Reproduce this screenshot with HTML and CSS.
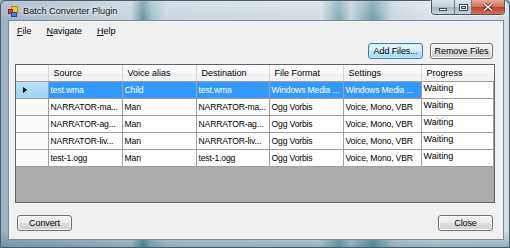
FILE: index.html
```html
<!DOCTYPE html>
<html lang="en">
<head>
<meta charset="UTF-8">
<title>Batch Converter Plugin</title>
<link rel="stylesheet" href="styles.css">
</head>
<body>

<div class="win">
  <div class="titlebar">
    <svg class="appicon" width="10" height="11" viewBox="0 0 10 11">
      <rect x="3.5" y="0.5" width="6" height="6" fill="#f2c43a" stroke="#b58a1c"/>
      <rect x="0.5" y="3.5" width="4" height="4" fill="#d9432e" stroke="#8e2315"/>
      <rect x="3.5" y="6.5" width="5" height="4" fill="#4f7fd6" stroke="#24489a"/>
    </svg>
    <span class="title">Batch Converter Plugin</span>
    <div class="ctrls">
      <span class="cb min"><i></i></span>
      <span class="cb max"><i></i></span>
      <span class="cb close">
        <svg width="10" height="8" viewBox="0 0 10 8"><path d="M1 0.5 L9 7.5 M9 0.5 L1 7.5" stroke="#5a1a12" stroke-width="3.2"/><path d="M1 0.5 L9 7.5 M9 0.5 L1 7.5" stroke="#fff" stroke-width="1.6"/></svg>
      </span>
    </div>
  </div>

  <div class="client">
    <nav class="menu">
      <span><u>F</u>ile</span>
      <span><u>N</u>avigate</span>
      <span><u>H</u>elp</span>
    </nav>

    <div class="tools">
      <button class="btn focus w55">Add Files...</button>
      <button class="btn w63">Remove Files</button>
    </div>

    <div class="grid">
      <table>
        <colgroup>
          <col class="c-rh"><col class="c74"><col class="c74"><col class="c73"><col class="c74"><col class="c78"><col>
        </colgroup>
        <thead>
          <tr>
            <th class="rh"></th><th>Source</th><th>Voice alias</th><th>Destination</th><th>File Format</th><th>Settings</th><th>Progress</th>
          </tr>
        </thead>
        <tbody>
          <tr class="sel">
            <td class="rh cur"><span class="arrow"></span></td><td>test.wma</td><td>Child</td><td>test.wma</td><td>Windows Media ...</td><td>Windows Media ...</td><td class="prog">Waiting</td>
          </tr>
          <tr>
            <td class="rh"></td><td>NARRATOR-ma...</td><td>Man</td><td>NARRATOR-ma...</td><td>Ogg Vorbis</td><td>Voice, Mono, VBR</td><td class="prog">Waiting</td>
          </tr>
          <tr>
            <td class="rh"></td><td>NARRATOR-ag...</td><td>Man</td><td>NARRATOR-ag...</td><td>Ogg Vorbis</td><td>Voice, Mono, VBR</td><td class="prog">Waiting</td>
          </tr>
          <tr>
            <td class="rh"></td><td>NARRATOR-liv...</td><td>Man</td><td>NARRATOR-liv...</td><td>Ogg Vorbis</td><td>Voice, Mono, VBR</td><td class="prog">Waiting</td>
          </tr>
          <tr>
            <td class="rh"></td><td>test-1.ogg</td><td>Man</td><td>test-1.ogg</td><td>Ogg Vorbis</td><td>Voice, Mono, VBR</td><td class="prog">Waiting</td>
          </tr>
        </tbody>
      </table>
    </div>

    <div class="foot">
      <button class="btn w55">Convert</button>
      <button class="btn w55">Close</button>
    </div>
  </div>
</div>

</body>
</html>
```

FILE: styles.css
```css
*{box-sizing:border-box}
body{margin:0;background:#8ea4b4;font-family:"Liberation Sans",Arial,sans-serif;font-size:9px;color:#000}

/* window frame (aero glass look) */
.win{width:510px;height:248px;display:flex;flex-direction:column;padding:0 5px 7px 7px;border:1px solid #4c5c6a;border-radius:6px 6px 0 0;
  background:
    linear-gradient(180deg,rgba(255,255,255,.25),rgba(255,255,255,0) 20px,rgba(0,0,0,0) 230px,rgba(20,90,110,.35)),
    linear-gradient(90deg,#9db1c1 0,#b7c7d3 90px,#c6d3dc 130px,#5f959f 142px,#9cbcc5 150px,#c9d6de 165px,#d3dde3 320px,#7eaab3 338px,#c2d3da 350px,#6d9fa9 372px,#cad7dd 392px,#dbe3e8 430px,#d2dde4 100%)}

.titlebar{height:19px;display:flex;align-items:center;padding-left:0}
.appicon{display:block;margin-top:1px}
.title{margin-left:5px;margin-top:1px;font-size:9.2px;color:#111;text-shadow:0 0 6px #fff,0 0 3px #fff}

.ctrls{margin-left:auto;margin-right:-1px;margin-top:-1px;align-self:flex-start;display:flex;height:15px;border:1px solid #4a5866;border-top:0;border-radius:0 0 4px 4px;overflow:hidden;box-shadow:0 0 0 1px rgba(255,255,255,.45)}
.cb{display:flex;align-items:center;justify-content:center;height:100%}
.min,.max{width:23px;background:linear-gradient(180deg,#dfe7ed 0,#c3d0da 48%,#a6b8c6 52%,#c5d3dd 100%);border-right:1px solid #6b7c8a}
.max{width:17px}
.close{width:32px;background:linear-gradient(180deg,#e8a896 0,#d3705c 48%,#bd4330 52%,#d66f58 100%)}
.min i{width:8px;height:3px;background:#fff;border:1px solid #3f4b56;margin-top:5px}
.max i{width:9px;height:7px;border:1px solid #3f4b56;box-shadow:inset 0 0 0 1px #fff,inset 0 0 0 2px #3f4b56;background:#c9d6df}
.close svg{display:block}

/* client area */
.client{flex:1;display:flex;flex-direction:column;background:#f0f0f0;border:1px solid #7b8b98}

.menu{height:19px;display:flex;align-items:center;gap:15px;padding-left:8px}
.menu u{text-decoration-thickness:1px;text-underline-offset:1px}

.tools{display:flex;justify-content:flex-end;gap:7px;margin-top:3px;padding-right:10px}

.btn{height:16px;padding:0;font-family:inherit;font-size:9px;letter-spacing:-0.1px;color:#000;border:1px solid #707070;border-radius:3px;
  background:linear-gradient(180deg,#f3f3f3 0,#ebebeb 48%,#dddddd 52%,#cfcfcf 100%);box-shadow:inset 0 0 0 1px #fbfbfb}
.btn.focus{border-color:#3c7fb1;background:linear-gradient(180deg,#eaf6fd 0,#d9f0fc 48%,#bee6fd 52%,#a7d9f5 100%);box-shadow:inset 0 0 0 1px #c8ecfd}
.w55{width:55px}
.w63{width:63px}

/* data grid */
.grid{height:139px;margin:5px 8px 0 6px;border:1px solid #646464;background:#ababab;overflow:hidden}
table{width:478px;table-layout:fixed;border-collapse:collapse}
.c-rh{width:32px}
.c74{width:74px}
.c73{width:73px}
.c78{width:78px}

th{height:16px;padding:0 0 0 5px;text-align:left;font-weight:normal;white-space:nowrap;
  background:linear-gradient(180deg,#ffffff 0,#f7f8fa 50%,#f1f2f4 51%,#f1f2f4 100%);border-right:1px solid #d5d5d5;border-bottom:1px solid #a0a0a0}
th:last-child{border-right:0}
td{height:17px;padding:0 0 0 2px;font-size:8.6px;letter-spacing:-0.15px;white-space:nowrap;overflow:hidden;background:#fff;border:1px solid #a0a0a0}
td:first-child{border-left:0}
tr:last-child td{border-bottom:1px solid #a0a0a0}
td.rh{background:#fafafa;border-color:#a0a0a0}
td.prog{vertical-align:top;padding-top:1px;font-size:9px;letter-spacing:0}

tr.sel td{background:#3399ff;color:#fff}
tr.sel td.prog{background:#fff;color:#000}
tr.sel td.cur{background:linear-gradient(180deg,#b9e1f8,#9fd3f3)}
.arrow{display:block;width:0;height:0;margin-left:5px;border-left:4px solid #000;border-top:3.5px solid transparent;border-bottom:3.5px solid transparent}

.foot{display:flex;justify-content:space-between;padding:12px 10px 0 8px}
```
